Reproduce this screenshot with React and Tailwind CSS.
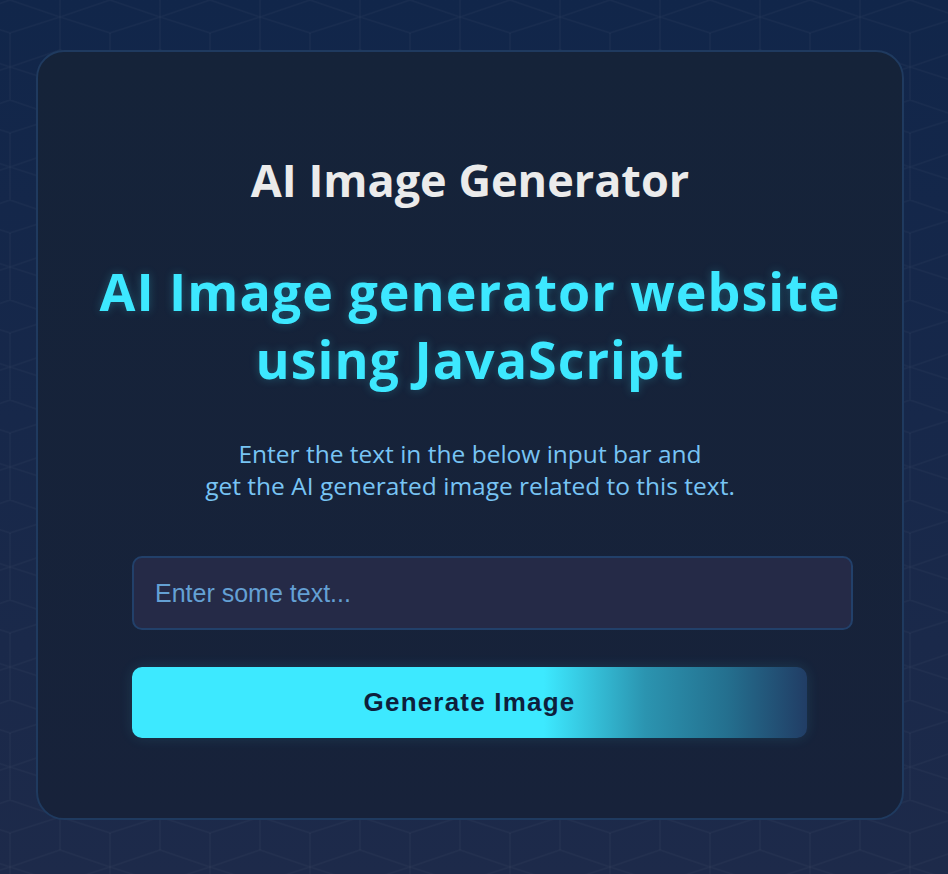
import React from "react";

function CubePattern() {
  return (
    <svg className="absolute inset-0 w-full h-full" aria-hidden="true">
      <defs>
        <pattern id="cubes" x="60" y="0" width="100" height="100" patternUnits="userSpaceOnUse">
          <g fill="none" stroke="#ffffff" strokeOpacity="0.028" strokeWidth="1.5">
            <path d="M0 17 L50 0 L100 17 L50 33 Z" />
            <path d="M0 17 V50 M50 33 V100 M100 17 V50" />
            <path d="M0 50 L50 67 L0 83 M100 50 L50 67 L100 83" />
            <path d="M0 83 V100 M0 0 V17 M100 83 V100 M100 0 V17" />
          </g>
        </pattern>
      </defs>
      <rect width="100%" height="100%" fill="url(#cubes)" />
    </svg>
  );
}

export default function App() {
  return (
    <div className="relative min-h-screen w-full overflow-hidden bg-gradient-to-b from-[#11264a] to-[#1d2a4a]">
      <CubePattern />

      <div className="relative pt-[50px] pl-[36px]">
        <div className="w-[868px] h-[770px] rounded-[28px] border-2 border-[#1f3a5f] bg-gradient-to-b from-[#152339] to-[#17223a] flex flex-col items-center pt-[99px] font-['Open_Sans','Noto_Sans',sans-serif]">
          <h1 className="text-[45px] leading-[58px] font-bold text-[#ebebeb]">
            AI Image Generator
          </h1>

          <h2 className="mt-[48px] text-[52px] leading-[68px] font-bold text-[#3de8ff] text-center tracking-[1px] [text-shadow:0_0_10px_rgba(62,232,255,0.25)]">
            AI Image generator website
            <br />
            using JavaScript
          </h2>

          <p className="mt-[45px] text-[24.5px] leading-[32px] text-[#78c4f4] text-center">
            Enter the text in the below input bar and
            <br />
            get the AI generated image related to this text.
          </p>

          <div className="self-start ml-[94px] mt-[54px] flex flex-col gap-[37px]">
            <input
              type="text"
              placeholder="Enter some text..."
              className="w-[721px] h-[74px] rounded-[10px] border-2 border-[#22406a] bg-[#252a47] px-[21px] text-[25px] text-[#cfe6ff] placeholder:text-[#64a0d4] outline-none font-['Liberation_Sans',Arial,sans-serif]"
            />
            <button
              type="button"
              className="w-[675px] h-[71px] rounded-[10px] bg-[linear-gradient(90deg,#3de9ff_0%,#3de9ff_61%,#2b94b0_76%,#24708f_88%,#213d65_100%)] shadow-[0_0_14px_rgba(62,232,255,0.12)] text-[26px] font-bold tracking-[1.2px] text-[#0e1f3c] font-['Liberation_Sans',Arial,sans-serif]"
            >
              Generate Image
            </button>
          </div>
        </div>
      </div>
    </div>
  );
}
